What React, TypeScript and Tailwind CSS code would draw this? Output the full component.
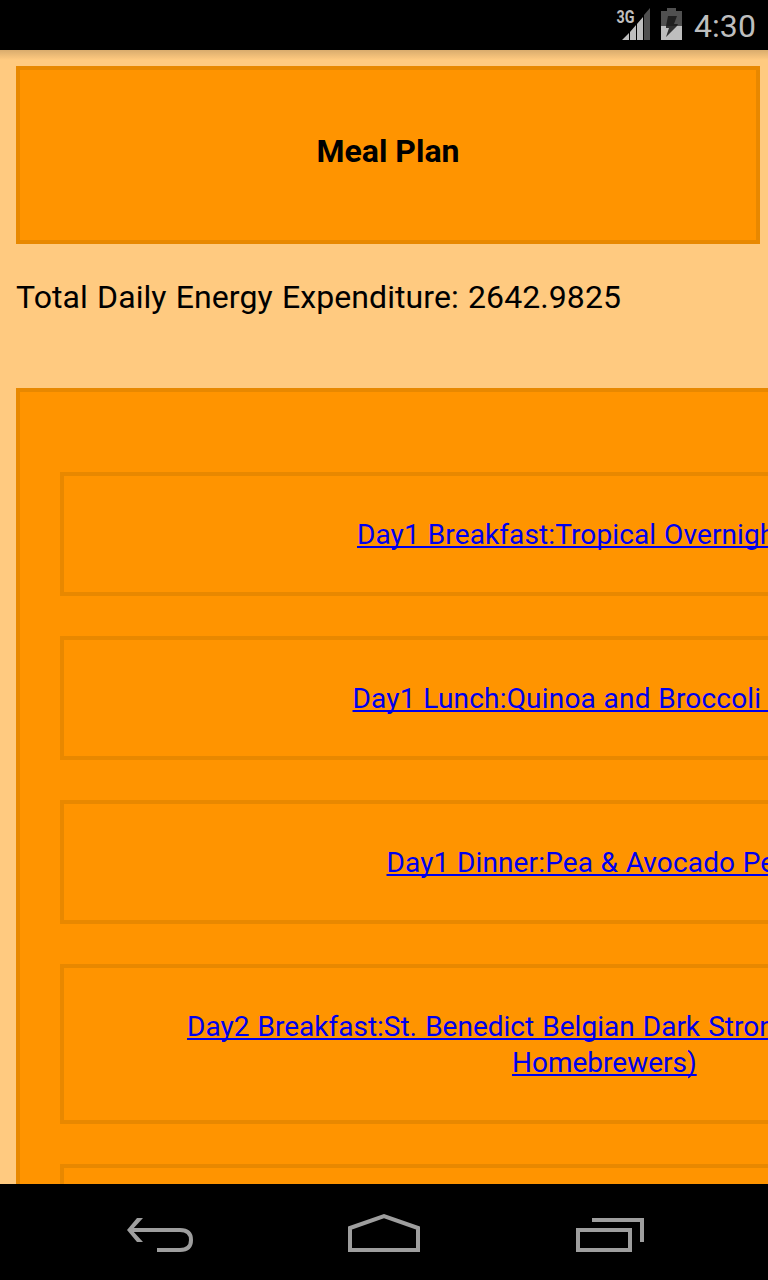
const meals = [
  { l: ["Day1 Breakfast:Tropical Overnight Oats"], x: "pl-[293px]", h: "h-[124px]", w: "[word-spacing:0.9px] tracking-[0.11px]" },
  { l: ["Day1 Lunch:Quinoa and Broccoli Slaw"], x: "pl-[288.500px]", h: "h-[124px]", w: "[word-spacing:0.5px] tracking-[0.19px]" },
  { l: ["Day1 Dinner:Pea & Avocado Pesto"], x: "pl-[322.500px]", h: "h-[124px]", w: "[word-spacing:0.4px] tracking-[0.14px]" },
  { l: ["Day2 Breakfast:St. Benedict Belgian Dark Strong Ale", "Homebrewers)"], x: "pl-[123px]", h: "h-[160px]", w: "[word-spacing:1.2px]" },
  { l: [""], x: "pl-[123px]", h: "h-[124px]", w: "" },
];

export default function App() {
  return (
    <div className="flex h-[1280px] w-[768px] flex-col overflow-hidden bg-[#ffca80] font-['Roboto',sans-serif] text-black">
      <header className="flex h-[50px] shrink-0 items-center justify-end bg-black pr-3 text-[#bebebe]">
        <svg width="68" height="50" viewBox="0 0 68 50" className="mr-[10px]" fill="#bebebe">
          <text x="0.500" y="23" fontSize="18.500" fontWeight="700" textLength="18" lengthAdjust="spacingAndGlyphs">3G</text>
          <path d="M28 15 34 8V40H28Z" fill="#505050" />
          <path d="M6 40 13 33V40ZM14 32 20 25V40H14ZM21 24 27 17V40H21Z" />
          <path d="M45 11H51V8H60V11H66V26H45Z" fill="#505050" />
          <path d="M45 26H66V40H45Z" />
          <path d="M52 16H61L58 24H62L61 26H50Z" fill="#202020" />
          <path d="M50 26H61L50 37L53 28H50Z" fill="#303030" />
        </svg>
        <span className="h-[50px] text-[32px] leading-[53px] tracking-[0.1px]">4:30</span>
      </header>
      <main className="h-[1134px] shrink-0 overflow-hidden bg-linear-to-b from-black/15 to-transparent bg-[length:100%_10px] bg-no-repeat pl-4 pt-4">
        <h1 className="flex h-[178px] w-[744px] items-center justify-center border-4 border-[#e88800] bg-[#ff9400] pb-2 text-[32px] font-bold">Meal Plan</h1>
        <p className="mt-[34px] h-[110px] text-[32px] leading-[38px] tracking-[0.08px] [word-spacing:1.2px]">Total Daily Energy Expenditure: 2642.9825</p>
        <section className="flex w-[1180px] flex-col gap-10 border-4 border-[#e88800] bg-[#ff9400] px-10 pt-20">
          {meals.map((m, i) => (
            <a key={i} className={`${m.x} ${m.h} ${m.w} block shrink-0 border-4 border-[#e88800] pt-[41px] text-[28px] leading-9 text-[#0000ee] underline decoration-2 underline-offset-[2px] [text-decoration-skip-ink:none]`}>
              {m.l.map((t, j) => <span key={j} className={j ? "block pl-[325px]" : "block"}>{t}</span>)}
            </a>
          ))}
        </section>
      </main>
      <nav className="flex h-24 shrink-0 items-center bg-black">
        <svg width="768" height="96" fill="none" stroke="#9e9e9e" strokeWidth="4">
          <path d="M130 46H180Q191 46 191 56Q191 66 180 66H157" />
          <path d="M127 46 137 34H143L132 46 143 58H137Z" fill="#9e9e9e" stroke="none" />
          <path d="M350 66V44L384 32 418 44V66Z" />
          <path d="M578 46H630V66H578ZM592 36H642V58" />
        </svg>
      </nav>
    </div>
  );
}
